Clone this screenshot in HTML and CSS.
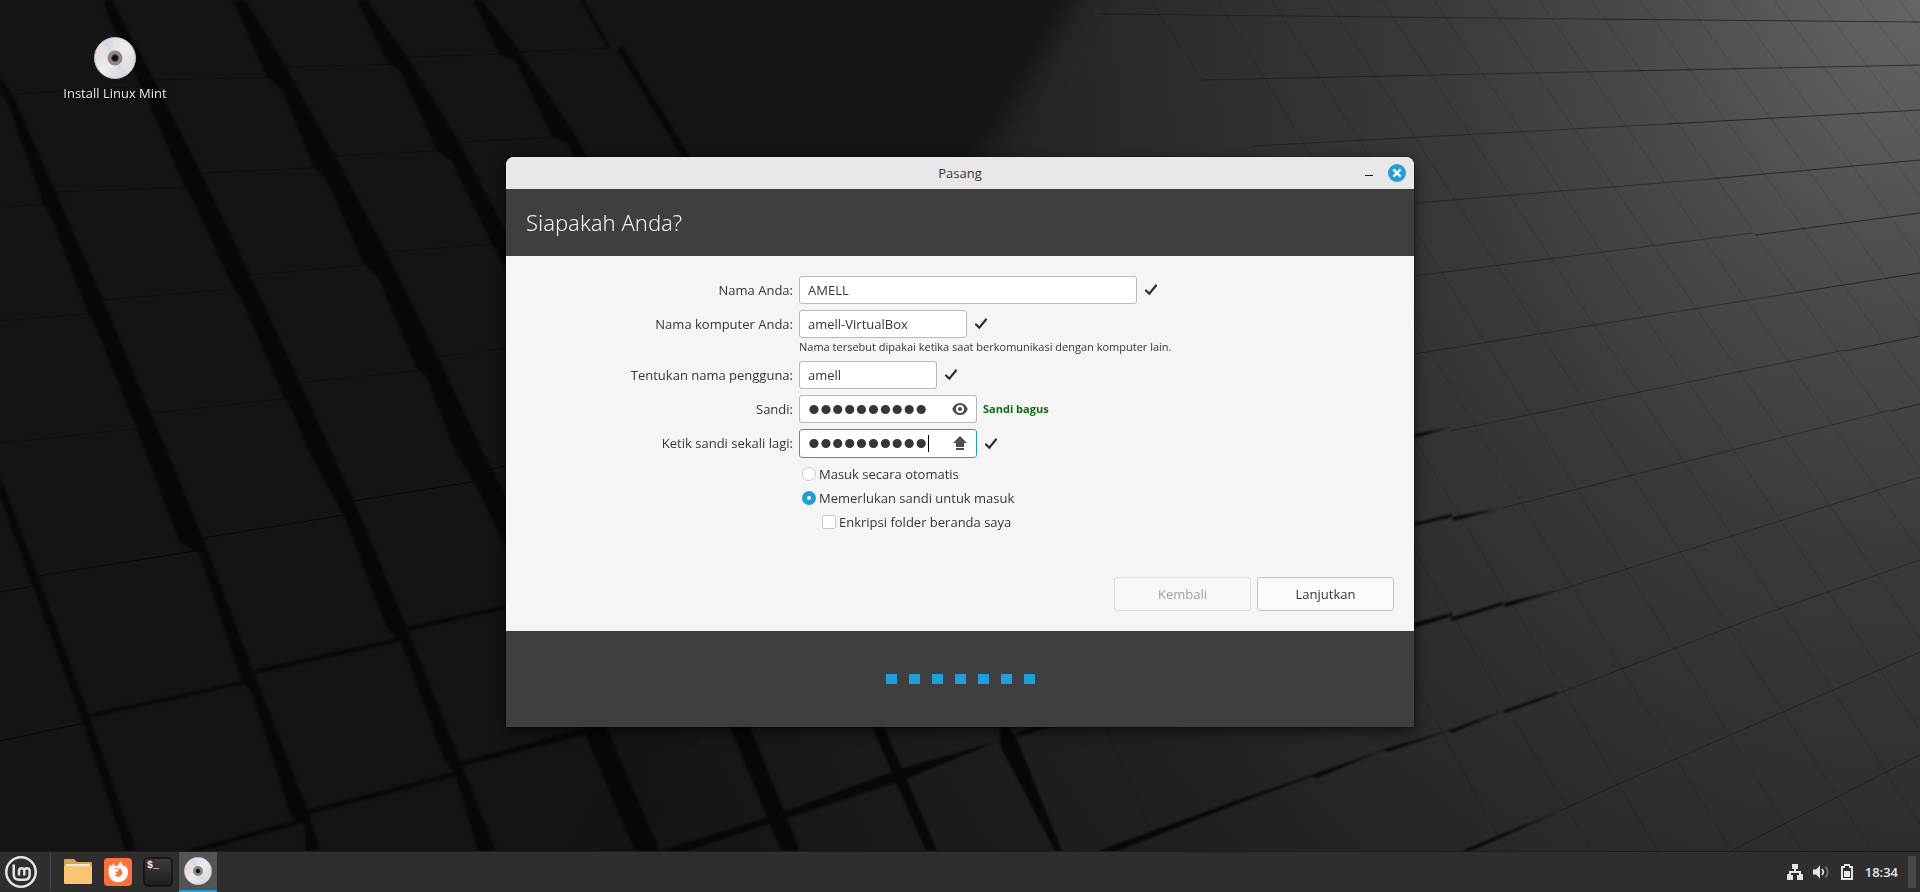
FILE: index.html
```html
<!DOCTYPE html>
<html lang="id">
<head>
<meta charset="utf-8">
<meta name="viewport" content="width=device-width, initial-scale=1">
<title>Pasang</title>
<link rel="stylesheet" href="styles.css">
</head>
<body>
<svg class="wallpaper" viewBox="0 0 1920 892" preserveAspectRatio="xMidYMid slice" aria-hidden="true">
  <defs>
    <radialGradient id="light" gradientUnits="userSpaceOnUse" cx="0" cy="0" r="1500" gradientTransform="translate(1920 -20) scale(1 1.2)">
      <stop offset="0" stop-color="#666"/>
      <stop offset=".1" stop-color="#575757"/>
      <stop offset=".2" stop-color="#484848"/>
      <stop offset=".32" stop-color="#3a3a3a"/>
      <stop offset=".5" stop-color="#2c2c2c"/>
      <stop offset=".65" stop-color="#212121"/>
      <stop offset=".87" stop-color="#181818"/>
      <stop offset="1" stop-color="#131313"/>
    </radialGradient>
    <filter id="soft" x="-10%" y="-10%" width="120%" height="120%" color-interpolation-filters="sRGB"><feGaussianBlur stdDeviation="14"/></filter>
    <filter id="edge" color-interpolation-filters="sRGB"><feGaussianBlur stdDeviation="1"/></filter>
  </defs>
  <rect width="1920" height="892" fill="url(#light)"/>
  <path d="M-60-60H1110L905 290 540 960H-60z" fill="#141414" filter="url(#soft)"/>
  <g fill="none" stroke="#000" stroke-opacity=".3">
    <path d="M154 80 280 77M285 67 400 64M407 57 510 54M519 52 611 48M12 94 148 86M57 192 194 187M201 173 331 167M335 156 453 150M459 142 565 137M0 207 51 204M103 300 243 288M250 275 378 264M386 252 506 243M0 321 96 313M151 413 294 398M300 383 429 369M438 357 506 348M0 443 143 428"/>
    <path stroke-opacity=".8" d="M0 592 34 586M38 576 195 551M203 538 344 515M354 501 484 480M492 469 506 466M0 741 84 723"/>
  </g>
  <g fill="#080808" filter="url(#edge)">
    <path d="M0 77 12 94 56 193 103 300 151 414 165 446 203 539 254 673 308 811 320 851H306L305 826 291 816 252 693 241 679 199 553 180 543 143 446 137 430 96 327 88 312 51 217 43 203 8 103 0 92z"/>
    <path d="M112 0 154 80 201 173 250 275 300 383 329 446 354 501 407 628 461 763 496 851H478L455 773 444 759 402 643 386 626 344 516 333 496 306 446 292 410 284 397 241 298 233 287 193 200 184 185 152 110 107 13 104 0z"/>
    <path d="M245 0 286 67 335 156 386 252 438 357 480 446 510 505V555L477 488 453 446 427 377 416 367 378 277 363 263 327 180 314 167 282 90 267 77 233 0z"/>
    <path d="M367 0 407 57 459 142 510 240V275L492 243 451 160 437 150 400 70 388 63 357 0z"/>
    <path d="M482 0 519 50 572 130 590 162H577L567 143 553 137 515 60 500 55 473 0z"/>
    <path d="M584 0 611 48H607L580 0zM622 46 692 160H684L618 51z"/>
    <path d="M0 476 38 576 88 714 136 851H126L83 723 34 589 0 496z"/>
    <path d="M580 722H604L660 851H635zM728 722H748L800 851H781zM870 722H882L937 851H926zM1000 722H1006L1018 742 1062 851H1055L1000 745z"/>
    <path d="M88 714 249 680V683L88 718zM254 670 398 638V642L254 674zM407 627 510 604V608L407 631zM184 851 305 818V822L194 853zM308 810 457 771V776L308 814zM461 762 600 724V730L461 767zM660 851 781 813 903 768 1068 722H1045L903 780 781 820 680 853zM1098 851 1235 801 1315 774 1385 749 1450 730 1505 710 1557 692V694L1505 713 1503 711 1452 733 1448 731 1387 752 1383 750 1317 778 1313 776 1237 804 1112 853zM1414 623 1452 613V616L1414 628zM1450 618 1503 602V605L1452 621zM1504 603 1554 591V592L1505 607zM1414 523 1452 514V517L1414 526zM1453 517 1502 508 1453 521zM1414 434 1449 428 1414 438zM1462 851 1502 834 1560 811 1502 837 1468 852z"/>
  </g>
  <g fill="none" stroke="#000" stroke-opacity=".34">
    <path d="M1101 14 1584 19M1202 80 1624 71M1253 146 1667 124M1414 203 1710 179M1414 276 1753 233M1414 354 1799 292M1450 431 1845 350M1502 508 1891 410M1553 592 1920 477M1557 694 1756 617 1920 560M1560 811 1614 786 1920 652M1731 851 1920 755"/>
    <path stroke-opacity=".5" d="M1584 19 1920 22M1624 71 1920 65M1667 124 1920 110M1710 179 1920 160M1755 235 1920 213M1799 292 1920 273M1845 351 1920 336M1891 411 1920 404"/>
  </g>
  <g fill="none" stroke="#000" stroke-opacity=".15">
    <path d="M1085 0 1093 11M1150 0 1202 79M1217 0 1732 851M1272 0 1802 851M1327 0 1872 851M1382 0 1920 824M1434 0 1920 730M1487 0 1920 638M1539 0 1920 552M1591 0 1920 468M1640 0 1920 392M1685 0 1920 325M1731 0 1920 258M1774 0 1920 196M1817 0 1920 136M1860 0 1920 78M1899 0 1920 28M1414 438 1658 851M1414 550 1592 851M1414 680 1506 851M1105 727 1160 851"/>
  </g>
</svg>

<svg class="symbols" aria-hidden="true">
  <defs>
    <linearGradient id="silver" x1="0" y1="0" x2="1" y2="1"><stop offset="0" stop-color="#d4d4d4"/><stop offset=".5" stop-color="#ececec"/><stop offset="1" stop-color="#cfcfcf"/></linearGradient>
    <linearGradient id="shell" x1="0" y1="0" x2="0" y2="1"><stop offset="0" stop-color="#3c3c3c"/><stop offset="1" stop-color="#1d1d1d"/></linearGradient>
    <symbol id="disc" viewBox="0 0 42 42">
      <circle cx="21" cy="21" r="20.500" fill="url(#silver)" stroke="#bdbdbd"/>
      <path fill="#f8d9cb" d="M21 21 2.500 14 5 9zM21 21 39.500 28 37 33z"/>
      <path fill="#cfeadb" d="M21 21 5 9 9 5zM21 21 37 33 33 37z"/>
      <path fill="#d3d8f2" d="M21 21 9 5 13 3zM21 21 33 37 29 39z"/>
      <path fill="#ecd3ea" d="M21 21 13 3 18 2zM21 21 29 39 24 40z"/>
      <circle cx="21" cy="21" r="5.500" fill="none" stroke="#8a8a8a" stroke-width="4"/>
      <circle cx="21" cy="21" r="3.500" fill="#111" stroke="#555"/>
    </symbol>
    <symbol id="check" viewBox="0 0 12 12"><path d="M1 6.500 4.300 9.700 11 1.500" fill="none" stroke="#2b2b2b" stroke-width="2.200" stroke-linecap="round"/></symbol>
  </defs>
</svg>

<main class="desktop">
  <a class="launcher" href="#installer">
    <svg class="launcher-icon"><use href="#disc"/></svg>
    <span>Install Linux Mint</span>
  </a>

  <section class="window" id="installer" aria-label="Pasang">
    <header class="titlebar">
      <span class="title">Pasang</span>
      <div class="window-controls">
        <button class="minimize" type="button" aria-label="Minimalkan"></button>
        <button class="close" type="button" aria-label="Tutup"><svg viewBox="0 0 18 18"><path d="M6.200 6.200l5.600 5.600m0-5.600-5.600 5.600" stroke="#fff" stroke-width="2.400" stroke-linecap="square"/></svg></button>
      </div>
    </header>
    <h1 class="heading">Siapakah Anda?</h1>
    <form class="page">
      <div class="fields">
        <label for="name">Nama Anda:</label>
        <div class="field"><input class="entry entry-name" id="name" type="text" value="AMELL"><svg class="check"><use href="#check"/></svg></div>

        <label for="host">Nama komputer Anda:</label>
        <div>
          <div class="field"><input class="entry entry-host" id="host" type="text" value="amell-VirtualBox"><svg class="check"><use href="#check"/></svg></div>
          <p class="hint">Nama tersebut dipakai ketika saat berkomunikasi dengan komputer lain.</p>
        </div>

        <label for="user">Tentukan nama pengguna:</label>
        <div class="field"><input class="entry entry-user" id="user" type="text" value="amell"><svg class="check"><use href="#check"/></svg></div>

        <label for="password">Sandi:</label>
        <div class="field">
          <div class="secret">
            <input class="entry entry-secret" id="password" type="password" value="rahasia123">
            <svg class="secret-icon" viewBox="0 0 16 16"><path fill="#4d4d4d" fill-rule="evenodd" d="M8 2C4.300 2 1.600 4 .3 8c1.300 4 4 6 7.700 6s6.400-2 7.700-6C14.400 4 11.700 2 8 2zm0 2a4 4 0 1 1 0 8 4 4 0 0 1 0-8z"/><circle cx="8" cy="8" r="2.100" fill="#4d4d4d"/></svg>
          </div>
          <strong class="strength">Sandi bagus</strong>
        </div>

        <label for="repeat">Ketik sandi sekali lagi:</label>
        <div class="field">
          <div class="secret">
            <input class="entry entry-secret focused" id="repeat" type="password" value="rahasia123">
            <span class="caret"></span>
            <svg class="secret-icon" viewBox="0 0 16 16"><path fill="#4d4d4d" d="M8 1 1 8h3v4h8V8h3zM4 13h8v2H4z"/></svg>
          </div>
          <svg class="check"><use href="#check"/></svg>
        </div>
      </div>

      <div class="options">
        <label class="option"><input class="radio" type="radio" name="login">Masuk secara otomatis</label>
        <label class="option"><input class="radio" type="radio" name="login" checked>Memerlukan sandi untuk masuk</label>
        <label class="option nested"><input class="tick" type="checkbox">Enkripsi folder beranda saya</label>
      </div>

      <div class="actions">
        <button class="action" type="button" disabled>Kembali</button>
        <button class="action" type="button">Lanjutkan</button>
      </div>
    </form>
    <footer class="progress">
      <i></i><i></i><i></i><i></i><i></i><i></i><i></i>
    </footer>
  </section>
</main>

<nav class="panel">
  <button class="menu" type="button" aria-label="Menu"><svg viewBox="0 0 32 32" fill="none" stroke="#e4e4e4" stroke-width="2.500"><circle cx="16" cy="16" r="14.700"/><path d="M8.700 8.500V18.500Q8.700 23.700 14 23.700H19.500Q24.600 23.700 24.600 18.700V14.500A2.700 2.700 0 0 0 19.300 14.500V19.500M19.300 14.500A2.700 2.700 0 0 0 14 14.500V19.500"/></svg></button>
  <span class="separator"></span>
  <div class="apps">
    <button class="app" type="button" aria-label="Berkas"><svg viewBox="0 0 30 30"><path d="M1 3Q1 2 2 2H11L14 5H28Q29 5 29 6V15H1z" fill="#dda54b"/><path d="M3 7H27V12H3z" fill="#ececec"/><path d="M1 9H29V26Q29 27 28 27H2Q1 27 1 26z" fill="#f9c66f"/></svg></button>
    <button class="app" type="button" aria-label="Firefox"><svg viewBox="0 0 30 30"><rect x="1" y="1" width="28" height="28" rx="4" fill="#ff7139"/><path fill="#fff" fill-rule="evenodd" d="M5.500 13.500C5.500 11 6 8.800 7.200 7.400L8.200 9.500 11 5.800 11.600 9C13 8.500 14.500 8.300 15.500 8.400 15.300 6.500 16.800 4.900 18.300 4.500 18 6.800 20.200 8 21.500 10L22 8.200C24.300 10.200 25.200 13 25 16 24.600 21.500 20.400 25.300 15.200 25.300 9.500 25.300 5.200 20.800 5.500 13.500zM10.800 12C12.500 11.600 14.500 12 15.600 13.400 14.500 14.800 13 14.300 12.400 15.700 12.500 16.600 13.500 17 14.500 17.200 13.500 18 12.200 18.300 11 17.800 13.400 21 19 20 19.300 15.800 19.300 13.500 18 11.500 16 10.800 17.300 12.400 16.800 12.500 15.500 12 14 10.700 12.300 10.700 10.800 12z"/></svg></button>
    <button class="app" type="button" aria-label="Terminal"><svg viewBox="0 0 30 30"><rect x="1" y="1" width="28" height="28" rx="4" fill="url(#shell)" stroke="#111" stroke-width="1.500"/><text class="prompt" x="4" y="11">$_</text></svg></button>
    <button class="app active" type="button" aria-label="Install Linux Mint"><svg><use href="#disc"/></svg></button>
  </div>
  <div class="tray">
    <svg viewBox="0 0 16 16" fill="#e6e6e6"><path d="M5 0H11V5H9V7H14V10H15Q16 10 16 11V16H10V11H12V9H4V11H6V16H0V11Q0 10 1 10H2V7H7V5H5z"/></svg>
    <svg viewBox="0 0 16 16"><path fill="#e6e6e6" d="M0 5.500H3L7 1.500V14.500L3 10.500H0z"/><path fill="none" stroke="#e6e6e6" stroke-width="1.700" d="M9 5Q11.600 8 9 11"/><path fill="none" stroke="#707070" stroke-width="1.700" d="M12.500 2.500Q17 8 12.500 13.500"/></svg>
    <svg viewBox="0 0 16 16"><path fill="#e6e6e6" fill-rule="evenodd" d="M5 0H11V2H14V16H2V2H5zM4 4V14H12V4H10V2H6V4zM5 7H11V13H5z"/></svg>
    <time class="clock">18:34</time>
    <button class="show-desktop" type="button" aria-label="Tampilkan desktop"></button>
  </div>
</nav>
</body>
</html>
```
FILE: styles.css
```css
* {
  box-sizing: border-box;
}

body {
  margin: 0;
  min-height: 100vh;
  display: flex;
  flex-direction: column;
  background: #141414;
  color: #363636;
  font: 13px/20px "Open Sans", "Noto Sans", sans-serif;
}

button,
input {
  margin: 0;
  padding: 0;
  border: 0;
  font: inherit;
  color: inherit;
}

svg {
  display: block;
}

.wallpaper {
  position: fixed;
  inset: 0;
  z-index: -1;
  width: 100%;
  height: 100%;
}

.symbols {
  position: absolute;
  width: 0;
  height: 0;
}

.desktop {
  position: relative;
  flex: 1;
  display: flex;
  justify-content: center;
  align-items: flex-start;
  padding-top: 157px;
}

.launcher {
  position: absolute;
  top: 37px;
  left: 55px;
  width: 120px;
  display: flex;
  flex-direction: column;
  align-items: center;
  gap: 4px;
  color: #e8e8e8;
  text-decoration: none;
  text-shadow: 1px 1px 1px #000;
}

.launcher-icon {
  width: 42px;
  height: 42px;
}

.window {
  width: 908px;
  max-width: 100%;
  border-radius: 8px 8px 0 0;
  overflow: hidden;
  background: #f5f5f5;
  box-shadow: 0 4px 14px rgba(0, 0, 0, .6), 0 0 2px rgba(0, 0, 0, .7);
}

.titlebar {
  display: grid;
  grid-template-columns: 1fr auto 1fr;
  align-items: center;
  height: 32px;
  padding: 0 8px;
  background: #e8e8e8;
}

.title {
  grid-column: 2;
  font-weight: 500;
}

.window-controls {
  display: flex;
  justify-content: flex-end;
  align-items: center;
  gap: 11px;
}

.minimize {
  width: 16px;
  height: 18px;
  padding: 11px 4px 6px;
  background: #1e1e1e content-box;
}

.close {
  width: 18px;
  height: 18px;
  border-radius: 50%;
  background: #1f9ede;
}

.heading {
  margin: 0;
  padding: 18px 20px 19px;
  background: #3f3f3f;
  color: #f0f0f0;
  font: 300 22px/30px "Noto Sans", "Open Sans", sans-serif;
}

.page {
  padding: 20px;
}

.fields {
  display: grid;
  grid-template-columns: 267px 1fr;
  gap: 6px;
}

.fields > label {
  line-height: 28px;
  text-align: right;
}

.field {
  display: flex;
  align-items: center;
}

.entry {
  height: 28px;
  padding: 0 8px;
  border: 1px solid #b8b8b8;
  border-radius: 3px;
  background: #fff;
}

.entry-name {
  width: 338px;
}

.entry-host {
  width: 168px;
}

.entry-user {
  width: 138px;
}

.secret {
  position: relative;
}

.entry-secret {
  display: block;
  width: 178px;
  padding-right: 32px;
  font: 34px "Liberation Sans", sans-serif;
}

.focused {
  height: 29px;
  border-color: #1f9ede;
}

.caret {
  position: absolute;
  top: 6px;
  left: 129px;
  width: 1px;
  height: 17px;
  background: #000;
}

.secret-icon {
  position: absolute;
  top: 6px;
  right: 9px;
  width: 16px;
  height: 16px;
}

.check {
  width: 12px;
  height: 12px;
  margin-left: 8px;
}

.hint {
  margin: 0;
  font-size: 11px;
  line-height: 17px;
}

.strength {
  margin-left: 6px;
  color: #0b6e0b;
  font-size: 11px;
}

.options {
  display: flex;
  flex-direction: column;
  margin: 4px 0 0 276px;
}

.option {
  display: flex;
  align-items: center;
  gap: 3px;
  height: 24px;
}

.nested {
  margin-left: 20px;
}

.radio,
.tick {
  appearance: none;
  width: 14px;
  height: 14px;
  border: 1px solid #c8c8c8;
  background: #fff;
}

.radio {
  border-radius: 50%;
}

.radio:checked {
  border: 5px solid #1f9ede;
}

.tick {
  border-radius: 2px;
}

.actions {
  display: flex;
  justify-content: flex-end;
  gap: 6px;
  margin-top: 43px;
}

.action {
  width: 137px;
  height: 34px;
  border: 1px solid #c2c2c2;
  border-radius: 3px;
  background: #fbfbfb;
}

.action:disabled {
  border-color: #dcdcdc;
  background: #f8f8f8;
  color: #a0a0a0;
}

.progress {
  display: flex;
  justify-content: center;
  align-items: center;
  gap: 12px;
  height: 96px;
  background: #3f3f3f;
}

.progress i {
  width: 11px;
  height: 10px;
  background: #1f9ede;
}

.panel {
  display: flex;
  align-items: stretch;
  height: 41px;
  border-top: 1px solid #1c1c1c;
  background: #2e2e2e;
}

.panel button {
  background: none;
}

.menu {
  padding: 0 13px 0 5px;
}

.menu svg {
  width: 32px;
  height: 32px;
}

.separator {
  width: 1px;
  margin: 1px 0;
  background: #484848;
}

.apps {
  display: flex;
  gap: 2px;
  margin-left: 8px;
}

.app {
  display: grid;
  place-items: center;
  width: 38px;
}

.app svg {
  width: 30px;
  height: 30px;
}

.panel .active {
  background: #545454;
  border-bottom: 2px solid #1f9ede;
}

.active svg {
  width: 28px;
  height: 28px;
}

.prompt {
  fill: #f0f0f0;
  font: bold 10px "Liberation Mono", monospace;
}

.tray {
  display: flex;
  align-items: center;
  gap: 10px;
  margin-left: auto;
  padding-right: 4px;
}

.tray svg {
  width: 16px;
  height: 16px;
}

.clock {
  color: #e6e6e6;
  font-weight: 600;
}

.panel .show-desktop {
  width: 8px;
  height: 32px;
  background: #484848;
}
```
